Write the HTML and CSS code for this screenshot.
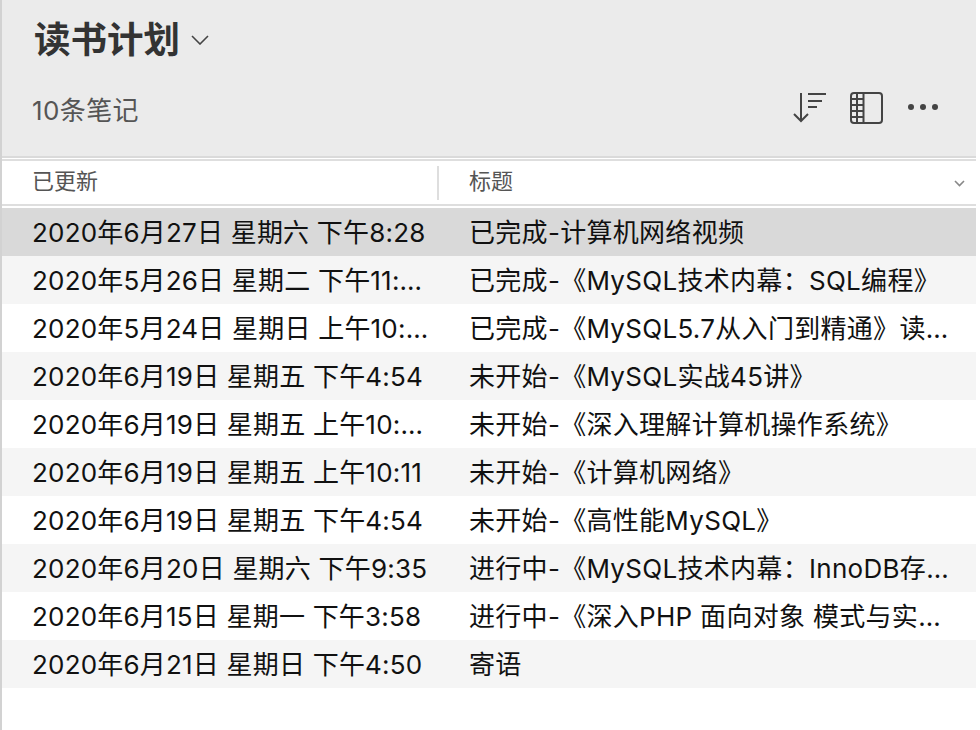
FILE: index.html
```html
<!DOCTYPE html>
<html>
	<head>
		<meta charset="utf-8">
		<title>读书计划</title>
		<link rel="stylesheet" href="styles.css">
	</head>
	<body>
		<div class="pageBody">
			<div class="header">
				<div class="titleLine">
					<h2>读书计划</h2>
					<svg class="titleArrow" width="18" height="10" viewBox="0 0 18 10"><path d="M1 1l8 8 8-8" fill="none" stroke="#444" stroke-width="1.6"/></svg>
				</div>
				<div class="toolLine">
					<span class="count">10条笔记</span>
					<div class="tools">
						<svg width="33" height="30" viewBox="0 0 33 30"><g fill="none" stroke="#444" stroke-width="2"><path d="M8 0v28M1 21l7 7 7-7"/><path d="M15 1h18M15 8h14M15 14h9"/></g></svg>
						<svg width="33" height="32" viewBox="0 0 33 32"><g fill="none" stroke="#444" stroke-width="2"><rect x="1" y="1" width="31" height="30" rx="3"/><path d="M13.500 1v30M7 1v30M1 7h12M1 13h12M1 19h12M1 25h12"/></g></svg>
						<svg class="moreIcon" width="32" height="8" viewBox="0 0 32 8"><g fill="#444"><circle cx="4" cy="4" r="3"/><circle cx="16" cy="4" r="3"/><circle cx="28" cy="4" r="3"/></g></svg>
					</div>
				</div>
			</div>
			<div class="thead">
				<div class="thCell thFirst">已更新</div>
				<div class="thCell thSecond"><span>标题</span>
					<svg class="sortArrow" width="11" height="7" viewBox="0 0 11 7"><path d="M1 1l4.500 4.500L10 1" fill="none" stroke="#888" stroke-width="1.600"/></svg>
				</div>
			</div>
			<ul class="noteList">
				<li class="selected"><span class="date">2020年6月27日 星期六 下午8:28</span><span class="name">已完成-计算机网络视频</span></li>
				<li class="odd"><span class="date">2020年5月26日 星期二 下午11:28</span><span class="name">已完成-《MySQL技术内幕：SQL编程》</span></li>
				<li><span class="date">2020年5月24日 星期日 上午10:38</span><span class="name">已完成-《MySQL5.7从入门到精通》读书笔记</span></li>
				<li class="odd"><span class="date">2020年6月19日 星期五 下午4:54</span><span class="name">未开始-《MySQL实战45讲》</span></li>
				<li><span class="date">2020年6月19日 星期五 上午10:38</span><span class="name">未开始-《深入理解计算机操作系统》</span></li>
				<li class="odd"><span class="date">2020年6月19日 星期五 上午10:11</span><span class="name">未开始-《计算机网络》</span></li>
				<li><span class="date">2020年6月19日 星期五 下午4:54</span><span class="name">未开始-《高性能MySQL》</span></li>
				<li class="odd"><span class="date">2020年6月20日 星期六 下午9:35</span><span class="name">进行中-《MySQL技术内幕：InnoDB存储引擎》</span></li>
				<li><span class="date">2020年6月15日 星期一 下午3:58</span><span class="name">进行中-《深入PHP 面向对象 模式与实践》</span></li>
				<li class="odd"><span class="date">2020年6月21日 星期日 下午4:50</span><span class="name">寄语</span></li>
			</ul>
		</div>
	</body>
</html>
```

FILE: styles.css
```css
html,body{
	margin: 0;
	height: 100%;
	background-color: #fff;
}
body{
	width: 976px;
	font-family: "Inter","Noto Sans CJK SC",sans-serif;
	color: #111;
	overflow: hidden;
}
.pageBody{
	height: 730px;
	border-left: 2px solid #d2d2d2;
}
.header{
	height: 158px;
	box-sizing: border-box;
	padding: 13px 37px 0 30px;
	background-color: #ebebeb;
	border-bottom: 2px solid #dadada;
}
.titleLine{
	display: flex;
	align-items: center;
	gap: 11px;
	padding-left: 2px;
	height: 48px;
}
h2{
	margin: 0;
	font-size: 36.500px;
	font-weight: 700;
	color: #333;
}
.titleArrow{margin-top: 6px;}
.toolLine{
	display: flex;
	justify-content: space-between;
	align-items: center;
	margin-top: 28px;
	height: 38px;
}
.count{
	font-size: 26px;
	letter-spacing: .4px;
	color: #555;
}
.tools{
	display: flex;
	align-items: center;
	gap: 24px;
}
.moreIcon{margin-top: -2px;}
.thead{
	display: flex;
	height: 47px;
	margin-top: 1px;
	border-top: 2px solid #dedede;
	border-bottom: 2px solid #dedede;
	align-items: center;
	box-sizing: border-box;
	font-size: 22px;
	color: #555;
}
.thCell{
	height: 34px;
	line-height: 30px;
	box-sizing: border-box;
}
.thFirst{
	width: 437px;
	padding-left: 30px;
	border-right: 2px solid #dedede;
}
.thSecond{
	flex: 1;
	padding: 0 11px 0 30px;
	display: flex;
	justify-content: space-between;
	align-items: flex-start;
}
.sortArrow{margin-top: 14px;}
.noteList{
	list-style: none;
	margin: 2px 0 0;
	padding: 0;
}
.noteList li{
	display: flex;
	height: 48px;
	line-height: 48px;
	font-size: 26px;
}
.noteList .odd{background-color: #f5f5f5;}
.noteList .selected{background-color: #d9d9d9;}
.date,.name{
	padding-top: 1px;
	white-space: nowrap;
	overflow: hidden;
	text-overflow: ellipsis;
	box-sizing: border-box;
}
.date{
	width: 438px;
	padding-left: 30px;
	padding-right: 10px;
	letter-spacing: .2px;
}
.name{
	width: 510px;
	padding-left: 29px;
	letter-spacing: .3px;
}
```
